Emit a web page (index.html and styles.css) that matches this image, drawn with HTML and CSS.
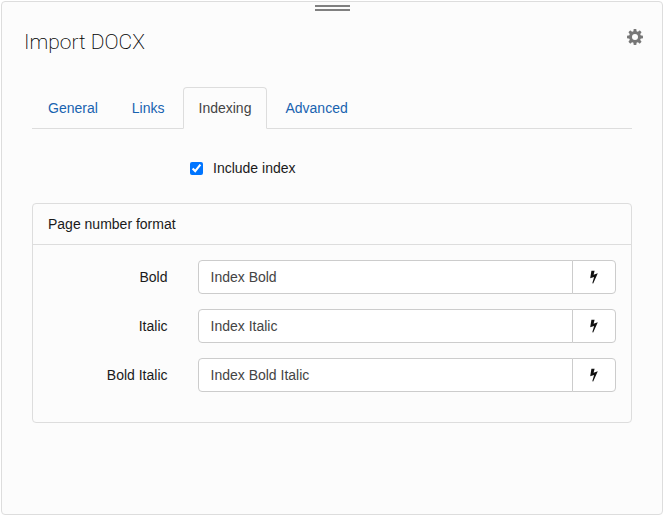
FILE: index.html
```
<!DOCTYPE html>
<html lang="en">
<head>
  <meta charset="UTF-8" />
  <title>Import DOCX</title>
  <link rel="stylesheet" href="styles.css">
</head>
<body>
  <svg class="symbols" width="0" height="0" aria-hidden="true">
    <symbol id="bolt" viewBox="0 0 10 14">
      <path d="M2.4 0.8L5.6 0.8L4.6 4.7L8.8 3.3L4.2 13.6L3.3 13.2L5.1 7L1.2 8.2Z" />
    </symbol>
  </svg>

  <main class="dialog">
    <div class="handle"></div>
    <header class="dialog-head">
      <h1>Import DOCX</h1>
      <button type="button" class="gear" aria-label="Settings">
        <svg viewBox="0 0 16 16" width="16" height="16">
          <g fill="currentColor">
            <rect x="6.5" y="0" width="3" height="16" rx="0.8" />
            <rect x="6.5" y="0" width="3" height="16" rx="0.8" transform="rotate(45 8 8)" />
            <rect x="6.5" y="0" width="3" height="16" rx="0.8" transform="rotate(90 8 8)" />
            <rect x="6.5" y="0" width="3" height="16" rx="0.8" transform="rotate(135 8 8)" />
            <circle cx="8" cy="8" r="6" />
          </g>
          <circle cx="8" cy="8" r="3" fill="#fcfcfc" />
        </svg>
      </button>
    </header>

    <form class="dialog-body">
      <nav class="tabs">
        <a href="#general">General</a>
        <a href="#links">Links</a>
        <a href="#indexing" class="active">Indexing</a>
        <a href="#advanced">Advanced</a>
      </nav>

      <div class="check-row">
        <input type="checkbox" id="include-index" checked>
        <label for="include-index">Include index</label>
      </div>

      <section class="panel">
        <h2>Page number format</h2>
        <div class="panel-body">
          <div class="row">
            <label for="bold">Bold</label>
            <div class="group">
              <input type="text" id="bold" value="Index Bold">
              <button type="button" aria-label="Set bold"><svg width="10" height="14"><use href="#bolt" /></svg></button>
            </div>
          </div>
          <div class="row">
            <label for="italic">Italic</label>
            <div class="group">
              <input type="text" id="italic" value="Index Italic">
              <button type="button" aria-label="Set italic"><svg width="10" height="14"><use href="#bolt" /></svg></button>
            </div>
          </div>
          <div class="row">
            <label for="bold-italic">Bold Italic</label>
            <div class="group">
              <input type="text" id="bold-italic" value="Index Bold Italic">
              <button type="button" aria-label="Set bold italic"><svg width="10" height="14"><use href="#bolt" /></svg></button>
            </div>
          </div>
        </div>
      </section>
    </form>
  </main>
</body>
</html>
```
FILE: styles.css
```
:root {
  --bg: #fcfcfc; --border: #ddd; --input-border: #ccc;
  --text: #1a1a1a; --link: #1863b0; --radius: 4px;
}
* { box-sizing: border-box; }
body {
  margin: 0; padding: 1px 1px 2px;
  min-height: 100vh;
  display: flex;
  background: #fff; color: var(--text);
  font: 14px/20px "Liberation Sans", Arial, sans-serif;
}
.symbols { position: absolute; }
.dialog {
  flex: 1;
  background: var(--bg);
  border: 1px solid var(--border);
  border-radius: var(--radius);
}
.handle {
  width: 35px; height: 6px;
  margin: 3px auto 0;
  border: solid #808080;
  border-width: 2px 0;
}
.dialog-head {
  display: flex; justify-content: space-between;
  padding: 16px 19px 0 22px;
}
h1 {
  margin: 0;
  color: #000;
  font: 200 21px/30px Roboto, "Liberation Sans", sans-serif;
}
.gear {
  height: 16px; margin-top: 2px; padding: 0;
  border: 0; background: none;
  color: #777; cursor: pointer;
}
.gear svg { display: block; }
.dialog-body { padding: 30px 30px 0; }

.tabs {
  display: flex; gap: 2px;
  border-bottom: 1px solid var(--border);
}
.tabs a {
  padding: 10px 15px;
  margin-bottom: -1px;
  border: 1px solid transparent;
  border-radius: var(--radius) var(--radius) 0 0;
  color: var(--link); text-decoration: none;
}
.tabs .active {
  background: var(--bg); color: #444;
  border-color: var(--border) var(--border) var(--bg);
}

.check-row {
  display: flex; align-items: center; gap: 10px;
  padding: 29px 0 25px;
  margin-left: calc(25% + 8px);
}
.check-row input {
  width: 13px; height: 13px; margin: 0;
  accent-color: #0075ff;
}

.panel {
  border: 1px solid var(--border);
  border-radius: var(--radius);
}
.panel h2 {
  margin: 0; padding: 10px 15px;
  border-bottom: 1px solid var(--border);
  font-size: 14px; font-weight: normal;
}
.panel-body { padding: 15px 0 30px; }
.row {
  display: grid;
  grid-template-columns: 1fr 3fr;
  margin-bottom: 15px;
}
.row:last-child { margin-bottom: 0; }
.row > label {
  padding: 7px 15px;
  text-align: right;
}
.group { display: flex; padding: 0 15px; }
.group input {
  flex: 1; min-width: 0; height: 34px;
  padding: 6px 12px;
  border: 1px solid var(--input-border);
  border-radius: var(--radius) 0 0 var(--radius);
  background: #fff; color: #444;
  font: inherit;
}
.group button {
  display: flex; align-items: center; justify-content: center;
  width: 44px; height: 34px; margin-left: -1px; padding: 0;
  border: 1px solid var(--input-border);
  border-radius: 0 var(--radius) var(--radius) 0;
  background: #fff; color: #111;
  cursor: pointer;
}
.group svg { fill: currentColor; }
```
